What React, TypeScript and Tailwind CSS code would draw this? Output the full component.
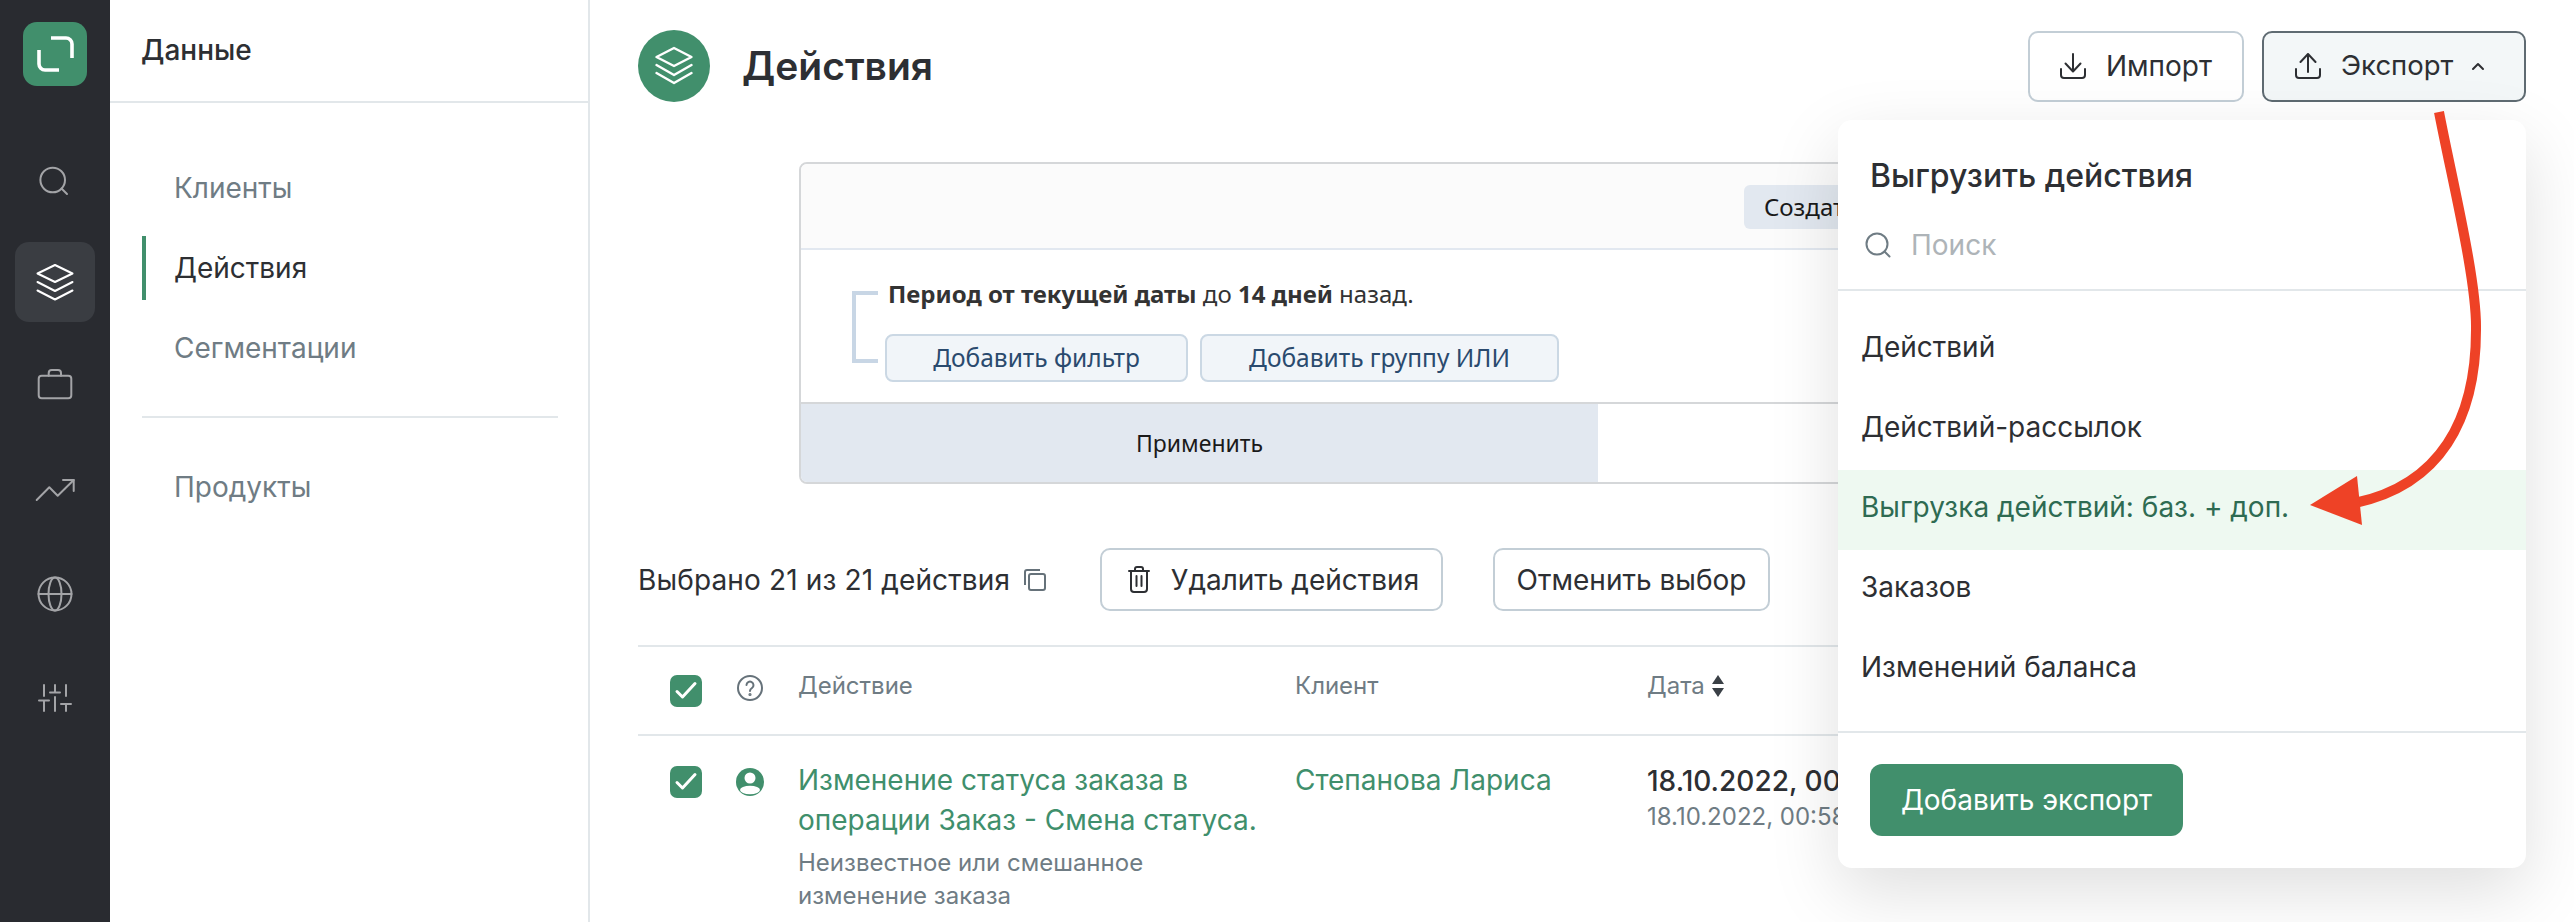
import React from "react";

const VB = (top: number) => `14 ${top} 80 80`;

function SideIcon({ top, active, children }: { top: number; active?: boolean; children: React.ReactNode }) {
  return (
    <div className={active ? "h-[80px] w-[80px] rounded-[14px] bg-[#3a3d42]" : "h-[80px] w-[80px]"}>
      <svg width="80" height="80" viewBox={VB(top)} fill="none" stroke={active ? "#ffffff" : "#a3a4a7"} strokeWidth="2" strokeLinecap="round" strokeLinejoin="round">
        {children}
      </svg>
    </div>
  );
}

function Check() {
  return (
    <div className="h-[32px] w-[32px] shrink-0 rounded-[7px] bg-[#418f6c]">
      <svg width="32" height="32" viewBox="0 0 32 32" fill="none" stroke="#ffffff" strokeWidth="3" strokeLinecap="round" strokeLinejoin="round">
        <path d="M7 16.5 L12.5 22 L25 8.5" />
      </svg>
    </div>
  );
}

export default function App() {
  return (
    <div className="relative flex h-[922px] w-[2574px] overflow-hidden bg-white font-['Inter',sans-serif]">
      {/* Rail */}
      <aside className="flex h-full w-[110px] shrink-0 flex-col items-center bg-[#292b30] pt-[22px]">
        <div className="h-[64px] w-[64px] rounded-[14px] bg-[#418f6c]">
          <svg width="64" height="64" viewBox="0 0 64 64" fill="none" stroke="#ffffff" strokeWidth="3.6">
            <path d="M28 16 H43 a6 6 0 0 1 6 6 V36" />
            <path d="M16 28 V42 a6 6 0 0 0 6 6 H36" />
          </svg>
        </div>
        <div className="mt-[52px] flex flex-col gap-[24px]">
          <SideIcon top={138}>
            <circle cx="51.7" cy="180" r="12.3" />
            <path d="M60.5 188.5 L66 194" />
          </SideIcon>
          <SideIcon top={242} active>
            <path d="M54 265 L71.5 273.5 L54 282 L36.5 273.5 Z" />
            <path d="M36.5 282 L54 291 L71.5 282" />
            <path d="M36.5 290.5 L54 299.5 L71.5 290.5" />
          </SideIcon>
          <SideIcon top={346}>
            <rect x="37.7" y="375.7" width="32.6" height="22.6" rx="3" />
            <path d="M47.7 375.7 V373 a3 3 0 0 1 3 -3 H57 a3 3 0 0 1 3 3 V375.7" />
          </SideIcon>
          <SideIcon top={450}>
            <path d="M35.7 500 L48.3 487.3 L56.7 495.7 L72.7 480" />
            <path d="M62 480 H72.7 V491" />
          </SideIcon>
          <SideIcon top={554}>
            <circle cx="54" cy="594" r="16.5" />
            <ellipse cx="54" cy="594" rx="6.5" ry="16.5" />
            <path d="M37.5 594 H70.5" />
          </SideIcon>
          <SideIcon top={658}>
            <path d="M43 685 V696 M38 700.5 H48 M43 700.5 V711" />
            <path d="M54 685 V692.5 M49 692.5 H59 M54 697 V711" />
            <path d="M65 685 V696 M60 704 H70 M65 704 V711" />
          </SideIcon>
        </div>
      </aside>

      {/* Secondary nav */}
      <nav className="h-full w-[480px] shrink-0 border-r-2 border-[#e2e7ea]">
        <div className="flex h-[103px] items-center border-b-2 border-[#e2e7ea] pb-[2px] pl-[31px] text-[28px] font-medium text-[#2d2f33]">Данные</div>
        <div className="pt-[45px] pr-[30px] pl-[32px] text-[28px] text-[#6f7c84]">
          <div className="flex h-[80px] items-center pl-[32px]">Клиенты</div>
          <div className="my-[8px] flex h-[64px] items-center border-l-4 border-[#418f6c] pl-[28px] text-[#2d2f33]">Действия</div>
          <div className="flex h-[80px] items-center pl-[32px]">Сегментации</div>
          <div className="mt-[28px] border-t-2 border-[#e2e7ea] pt-[29px]">
            <div className="flex h-[80px] items-center pl-[32px]">Продукты</div>
          </div>
        </div>
      </nav>

      {/* Main */}
      <main className="min-w-0 flex-1 pl-[48px]">
        <header className="flex items-center justify-between pt-[30px] pr-[48px]">
          <div className="flex items-center gap-[32px]">
            <div className="flex h-[72px] w-[72px] items-center justify-center rounded-full bg-[#418f6c]">
              <svg width="40" height="40" viewBox="0 0 40 40" fill="none" stroke="#ffffff" strokeWidth="2.4" strokeLinejoin="round" strokeLinecap="round">
                <path d="M20 2 L37.5 11 L20 20 L2.5 11 Z" />
                <path d="M2.5 19 L20 29 L37.5 19" />
                <path d="M2.5 27 L20 37 L37.5 27" />
              </svg>
            </div>
            <h1 className="text-[39px] font-semibold text-[#2d2f33]">Действия</h1>
          </div>
          <div className="flex gap-[18px]">
            <button className="flex h-[71px] w-[216px] items-center justify-center gap-[20px] rounded-[10px] border-2 border-[#c3ced6] bg-white text-[28px] text-[#2d2f33]">
              <svg width="26" height="26" viewBox="0 0 26 26" fill="none" stroke="#2d2f33" strokeWidth="2" strokeLinecap="round" strokeLinejoin="round">
                <path d="M13 1 V18 M5.5 10.5 L13 18.5 L20.5 10.5" />
                <path d="M1 16 V22 a3 3 0 0 0 3 3 H22 a3 3 0 0 0 3 -3 V16" />
              </svg>
              Импорт
            </button>
            <button className="flex h-[71px] w-[264px] items-center gap-[20px] rounded-[10px] border-2 border-[#5f6b72] bg-[#f3f7f8] pl-[31px] text-[27.5px] text-[#2d2f33]">
              <svg width="26" height="26" viewBox="0 0 26 26" fill="none" stroke="#2d2f33" strokeWidth="2" strokeLinecap="round" strokeLinejoin="round">
                <path d="M13 19 V1.5 M5.5 9 L13 1 L20.5 9" />
                <path d="M1 16 V22 a3 3 0 0 0 3 3 H22 a3 3 0 0 0 3 -3 V16" />
              </svg>
              Экспорт
              <svg className="-ml-[2px]" width="14" height="10" viewBox="0 0 14 10" fill="none" stroke="#2d2f33" strokeWidth="2" strokeLinecap="round" strokeLinejoin="round">
                <path d="M2 8 L7 3 L12 8" />
              </svg>
            </button>
          </div>
        </header>

        {/* Filter box */}
        <section className="mt-[60px] ml-[161px] w-[1598px] overflow-hidden rounded-[8px] border-2 border-[#d5d7d9] font-['Noto_Sans',sans-serif]">
          <div className="flex h-[86px] items-center justify-end border-b-2 border-[#e2e8f0] bg-[#fbfbfb] pt-[2px] pr-[40px]">
            <span className="flex h-[44px] w-[611px] items-center rounded-[6px] bg-[#e2e8f0] pl-[20px] text-[24px] text-[#1a1a1a]">Создать</span>
          </div>
          <div className="relative h-[152px] pt-[28px] pl-[84px]">
            <div className="absolute top-[41px] left-[51px] h-[72px] w-[26px] border-y-4 border-l-4 border-[#c8d6e5]" />
            <div className="ml-[3px] text-[24px] leading-[32px] text-[#333333]">
              <b className="font-bold">Период от текущей даты</b> до <b className="font-bold">14 дней</b> назад.
            </div>
            <div className="mt-[24px] flex gap-[12px]">
              <button className="h-[48px] w-[303px] rounded-[8px] border-2 border-[#cbd8e4] bg-[#f1f5f9] text-[24.5px] text-[#2a4a6e]">Добавить фильтр</button>
              <button className="h-[48px] w-[359px] rounded-[8px] border-2 border-[#cbd8e4] bg-[#f1f5f9] text-[24.5px] text-[#2a4a6e]">Добавить группу ИЛИ</button>
            </div>
          </div>
          <div className="flex h-[80px] border-t-2 border-[#d5d7d9]">
            <div className="flex w-[797px] items-center justify-center bg-[#e2e8f0] text-[23px] text-[#1a1a1a]">Применить</div>
          </div>
        </section>

        {/* Selection bar */}
        <div className="mt-[64px] flex h-[63px] items-center text-[28px] text-[#2d2f33]">
          <span className="w-[372px] whitespace-nowrap tracking-[0.14px]">Выбрано 21 из 21 действия</span>
          <svg className="ml-[14px]" width="22" height="22" viewBox="0 0 22 22" fill="none" stroke="#66727a" strokeWidth="2" strokeLinejoin="round">
            <rect x="5" y="5" width="16" height="16" rx="2" />
            <path d="M1 16 V3 a2 2 0 0 1 2 -2 H16" />
          </svg>
          <button className="ml-[54px] flex h-[63px] w-[343px] items-center justify-center gap-[21px] rounded-[10px] border-2 border-[#c3ced6] bg-white pl-[4px]">
            <svg width="22" height="27" viewBox="0 0 22 27" fill="none" stroke="#2d2f33" strokeWidth="2" strokeLinecap="round" strokeLinejoin="round">
              <path d="M1 5 H21 M7 5 V3 a2 2 0 0 1 2 -2 H13 a2 2 0 0 1 2 2 V5 M3 5 V23 a3 3 0 0 0 3 3 H16 a3 3 0 0 0 3 -3 V5 M8.5 10 V20 M13.5 10 V20" />
            </svg>
            Удалить действия
          </button>
          <button className="ml-[50px] flex h-[63px] w-[277px] items-center justify-center rounded-[10px] border-2 border-[#c3ced6] bg-white">Отменить выбор</button>
        </div>

        {/* Table */}
        <div className="mt-[34px] mr-[48px]">
          <div className="flex h-[91px] items-center border-y-2 border-[#e2e7ea] text-[24px] text-[#6f7c84]">
            <div className="w-[99px] pl-[32px]"><Check /></div>
            <div className="w-[61px] pb-[6px]">
              <svg width="26" height="26" viewBox="0 0 26 26" fill="none" stroke="#66727a" strokeWidth="2" strokeLinecap="round">
                <circle cx="13" cy="13" r="12" />
                <path d="M9.5 10 a3.5 3.5 0 1 1 5.5 3 c-1.3 .9 -2 1.5 -2 3" />
                <circle cx="13" cy="19.5" r=".6" fill="#66727a" />
              </svg>
            </div>
            <div className="w-[497px] pb-[9px]">Действие</div>
            <div className="w-[352px] pb-[9px]">Клиент</div>
            <div className="flex items-center gap-[6px] pb-[9px]">
              Дата
              <svg width="14" height="24" viewBox="0 0 14 24" fill="#3a4046">
                <path d="M7 1 L13 10 H1 Z" />
                <path d="M7 23 L13 14 H1 Z" />
              </svg>
            </div>
          </div>
          <div className="flex pt-[30px]">
            <div className="w-[99px] pl-[32px]"><Check /></div>
            <div className="w-[61px] pt-[2px]">
              <svg className="-ml-[1px]" width="28" height="28" viewBox="0 0 28 28">
                <circle cx="14" cy="14" r="14" fill="#418f6c" />
                <circle cx="14" cy="10" r="5.5" fill="#ffffff" />
                <ellipse cx="14" cy="22" rx="10" ry="4.2" fill="#ffffff" />
              </svg>
            </div>
            <div className="-mt-[6px] w-[497px]">
              <div className="text-[28px] leading-[40px] text-[#3f8f6c]">Изменение статуса заказа в<br />операции Заказ - Смена статуса.</div>
              <div className="mt-[6px] text-[24px] leading-[33px] text-[#6f7c84]">Неизвестное или смешанное<br />изменение заказа</div>
            </div>
            <div className="-mt-[6px] w-[352px] text-[28px] leading-[40px] text-[#3f8f6c]">Степанова Лариса</div>
            <div className="-mt-[5px] whitespace-nowrap">
              <div className="text-[28px] leading-[40px] font-medium text-[#2d2f33]">18.10.2022, 00:58</div>
              <div className="text-[24px] leading-[32px] text-[#6f7c84]">18.10.2022, 00:58</div>
            </div>
          </div>
        </div>
      </main>

      {/* Export dropdown */}
      <div className="absolute top-[120px] left-[1838px] flex h-[748px] w-[688px] flex-col rounded-[14px] bg-white shadow-[0_24px_70px_rgba(0,0,0,0.13)]">
        <div className="pt-[38px] pl-[32px] text-[32px] leading-[36px] font-medium text-[#2d2f33]">Выгрузить действия</div>
        <div className="flex h-[97px] items-center gap-[20px] border-b-2 border-[#e2e7ea] pt-[7px] pl-[27px] text-[28px] text-[#aeb4b8]">
          <svg width="26" height="26" viewBox="0 0 26 26" fill="none" stroke="#6f7c84" strokeWidth="2" strokeLinecap="round">
            <circle cx="12" cy="12" r="10.5" />
            <path d="M19.5 19.5 L24.5 24.5" />
          </svg>
          Поиск
        </div>
        <div className="pt-[19px] text-[28px] text-[#2d2f33]">
          <div className="flex h-[80px] items-center pb-[7px] pl-[23px]">Действий</div>
          <div className="flex h-[80px] items-center pb-[7px] pl-[23px]">Действий-рассылок</div>
          <div className="flex h-[80px] items-center bg-[#eef9f1] pb-[7px] pl-[23px] text-[#2e6b52]">Выгрузка действий: баз. + доп.</div>
          <div className="flex h-[80px] items-center pb-[7px] pl-[23px]">Заказов</div>
          <div className="flex h-[80px] items-center pb-[7px] pl-[23px]">Изменений баланса</div>
        </div>
        <div className="mt-[21px] border-t-2 border-[#e2e7ea] pt-[31px] pl-[32px]">
          <button className="h-[72px] w-[313px] rounded-[12px] bg-[#418f6c] text-[28px] text-white">Добавить экспорт</button>
        </div>
      </div>

      {/* Annotation arrow */}
      <svg className="pointer-events-none absolute top-0 left-0" width="2574" height="922" viewBox="0 0 2574 922" fill="none">
        <path d="M2439 112 C2452 180 2477 280 2476 330 C2476 420 2440 485 2355 503" stroke="#ee4226" strokeWidth="10" />
        <path d="M2310 505 L2357 476 L2362 525 Z" fill="#ee4226" />
      </svg>
    </div>
  );
}
